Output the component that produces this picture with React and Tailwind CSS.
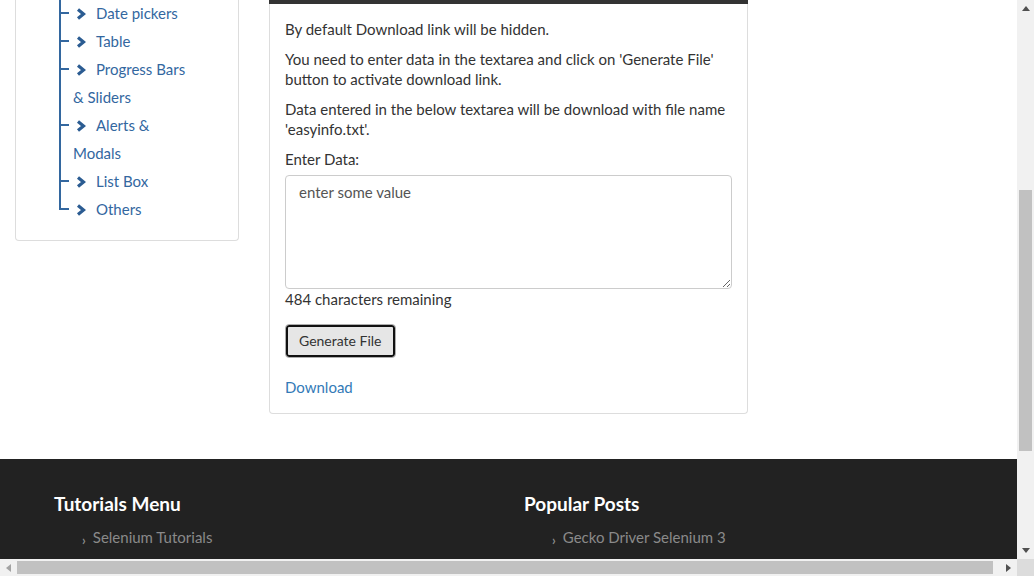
const navItems = [
  ["Date pickers"],
  ["Table"],
  ["Progress Bars", "& Sliders"],
  ["Alerts &", "Modals"],
  ["List Box"],
  ["Others"],
];

function Chevron() {
  return (
    <svg width="10" height="12" viewBox="0 0 10 12" className="inline-block ml-[3px] mr-[10px] -mt-[3px] align-middle">
      <polyline points="2,1.5 7.5,6 2,10.5" fill="none" stroke="#2b5c92" strokeWidth="3.2" />
    </svg>
  );
}

function Sidebar() {
  return (
    <div className="border border-t-0 border-[#ddd] rounded-b-[4px] bg-white pb-[17px]">
      <ul className="ml-[57px] mr-4 -mt-px">
        {navItems.map((lines, i) => {
          const last = i === navItems.length - 1;
          return (
            <li key={i} className="relative leading-[28px] text-[15px] text-[#33679f]">
              <span className={"absolute left-[-14px] top-0 w-[2px] bg-[#33679f] " + (last ? "h-[14px]" : "bottom-0")} />
              <span className="absolute left-[-14px] top-[13px] w-[10px] h-[2px] bg-[#33679f]" />
              <Chevron />
              {lines[0]}
              {lines[1] && (
                <>
                  <br />
                  {lines[1]}
                </>
              )}
            </li>
          );
        })}
      </ul>
    </div>
  );
}

function MainPanel() {
  return (
    <div className="border border-t-0 border-[#ddd] rounded-b-[4px] bg-white">
      <div className="h-[4px] bg-[#333] -mx-px" />
      <div className="p-[15px] pb-[16px] text-[15px] leading-[20px] text-[#333]">
        <p className="mb-[10px]">By default Download link will be hidden.</p>
        <p className="mb-[10px]">
          You need to enter data in the textarea and click on 'Generate File' button to activate download link.
        </p>
        <p className="mb-[10px]">
          Data entered in the below textarea will be download with file name 'easyinfo.txt'.
        </p>
        <label className="block mb-[6px]">Enter Data:</label>
        <textarea
          className="block w-full h-[114px] border border-[#ccc] rounded-[4px] px-[13px] py-[6px] text-[15px] leading-[20px] text-[#555] placeholder:text-[#555] outline-none"
          placeholder="enter some value"
        />
        <div>484 characters remaining</div>
        <button className="mt-[15px] h-[34px] px-[13px] rounded-[4px] border border-[#adadad] bg-[#e6e6e6] text-[14px] text-[#333] shadow-[inset_0_0_0_2px_#111]">
          Generate File
        </button>
        <div className="mt-[19px]">
          <a href="#" className="text-[#337ab7]">Download</a>
        </div>
      </div>
    </div>
  );
}

function Footer() {
  return (
    <div className="bg-[#222] h-[100px] pt-[34px]">
      <div className="ml-[54px] w-[940px] grid grid-cols-2">
        {[
          ["Tutorials Menu", "Selenium Tutorials"],
          ["Popular Posts", "Gecko Driver Selenium 3"],
        ].map(([title, item]) => (
          <div key={title}>
            <h3 className="text-white font-bold text-[19px] leading-[22px]">{title}</h3>
            <div className="mt-[12px] ml-[28px] text-[15px] leading-[20px] text-[#8a8a8a]">
              <span className="text-[13px] font-bold mr-[7px] relative top-[2px]">›</span>
              {item}
            </div>
          </div>
        ))}
      </div>
    </div>
  );
}

function Arrow({ dir }) {
  const pts = {
    up: "0,5 4,0 8,5",
    down: "0,0 4,5 8,0",
    left: "5,0 0,4 5,8",
    right: "0,0 5,4 0,8",
  }[dir];
  const vert = dir === "up" || dir === "down";
  return (
    <svg width={vert ? 8 : 5} height={vert ? 5 : 8} viewBox={vert ? "0 0 8 5" : "0 0 5 8"}>
      <polygon points={pts} fill={dir === "left" ? "#a3a3a3" : "#505050"} />
    </svg>
  );
}

export default function App() {
  return (
    <div className="w-[1034px] h-[576px] overflow-hidden flex flex-col bg-white" style={{ fontFamily: "Lato, 'Noto Sans', sans-serif" }}>
      <div className="flex flex-1 min-h-0">
        <div className="w-[1017px] overflow-hidden">
          <div className="flex">
            <div className="w-[254px] px-[15px]">
              <Sidebar />
            </div>
            <div className="w-[509px] px-[15px]">
              <MainPanel />
            </div>
          </div>
          <div className="mt-[45px]">
            <Footer />
          </div>
        </div>
        <div className="w-[17px] bg-[#f1f1f1] flex flex-col items-center">
          <div className="h-[17px] flex items-center justify-center"><Arrow dir="up" /></div>
          <div className="flex-1 w-full px-[2px] pt-[173px] pb-[91px]">
            <div className="h-full bg-[#c1c1c1]" />
          </div>
          <div className="h-[17px] flex items-center justify-center"><Arrow dir="down" /></div>
        </div>
      </div>
      <div className="h-[17px] flex bg-[#f1f1f1]">
        <div className="w-[17px] flex items-center justify-center"><Arrow dir="left" /></div>
        <div className="flex-1 py-[2px] pr-[7px]">
          <div className="h-full bg-[#c1c1c1]" />
        </div>
        <div className="w-[17px] flex items-center justify-center"><Arrow dir="right" /></div>
        <div className="w-[17px] bg-[#dcdcdc]" />
      </div>
    </div>
  );
}
